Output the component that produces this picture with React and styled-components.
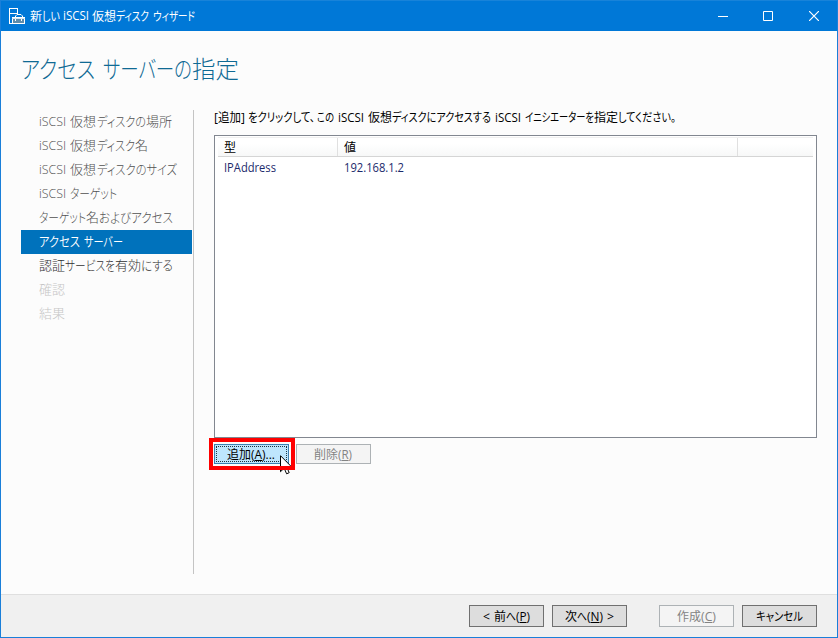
import React, { useLayoutEffect, useRef } from "react";
import styled, { createGlobalStyle } from "styled-components";

const GlobalStyle = createGlobalStyle`
  * { box-sizing: border-box; }
  body { margin: 0; background: #fcfcfc; }
`;

const Window = styled.div`
  width: 838px;
  height: 638px;
  display: flex;
  flex-direction: column;
  background: #fcfcfc;
  border: 1px solid #1a7fd9;
  border-top: 0;
  font-family: "Open Sans", "Noto Sans CJK JP", sans-serif;
  font-size: 12px;
  color: #000;
  overflow: hidden;
`;

const TitleBar = styled.header`
  height: 31px;
  flex: none;
  display: flex;
  align-items: center;
  background: #0078d7;
  border-top: 1px solid #1883d9;
  color: #fff;
  padding-left: 8px;
`;

const WindowTitle = styled.div`
  margin-left: 4px;
  padding-bottom: 1px;
  flex: 1;
`;

const WindowControls = styled.div`
  display: flex;
`;

const ControlButton = styled.button`
  width: 46px;
  height: 30px;
  padding: 0 0 1px;
  border: 0;
  background: none;
  color: #fff;
  display: flex;
  align-items: center;
  justify-content: center;
`;

const PageTitle = styled.h1`
  margin: 0;
  height: 79px;
  flex: none;
  padding: 19px 0 0 20px;
  font-size: 24px;
  font-weight: 200;
  line-height: 38px;
  color: #0f6a94;
`;

const Body = styled.div`
  flex: 1;
  min-height: 0;
  display: flex;
`;

const Sidebar = styled.nav`
  width: 193px;
  height: 464px;
  padding: 0 1px 0 20px;
  border-right: 1px solid #c4c4c4;
`;

const stepColors = { done: "#505050", current: "#ffffff", next: "#303030", disabled: "#c6c6c6" };

const Step = styled.div`
  height: 24px;
  line-height: 22px;
  padding-left: 18px;
  font-size: 13px;
  font-weight: ${(p) => (p.$state === "current" ? 350 : 300)};
  color: ${(p) => stepColors[p.$state]};
  background: ${(p) => (p.$state === "current" ? "#0072bc" : "transparent")};
`;

const Content = styled.main`
  width: 603px;
  margin-left: 20px;
`;

const Instruction = styled.div`
  height: 25px;
  line-height: 16px;
`;

const Table = styled.div`
  height: 303px;
  padding: 1px 3px;
  border: 1px solid #828790;
  background: #fff;
`;

const HeaderRow = styled.div`
  height: 20px;
  display: flex;
  border-top: 1px solid #f0f0f0;
  border-bottom: 1px solid #d5d5d5;
  background: linear-gradient(#fff 30%, #f7f8f8);
`;

const HeaderCell = styled.div`
  width: ${(p) => p.$width}px;
  padding-left: 6px;
  line-height: 19px;
  border-right: 1px solid #e0e0e0;
`;

const DataRow = styled.div`
  height: 22px;
  display: flex;
  line-height: 22px;
  color: #1b2a6b;
`;

const DataCell = styled.div`
  width: ${(p) => p.$width}px;
  padding-left: 6px;
`;

const Actions = styled.div`
  display: flex;
  gap: 7px;
  padding-top: 6px;
`;

const buttonBorder = { normal: "#707070", hot: "#3c7fb1", disabled: "#adb2b5" };
const buttonFill = { normal: "#dddddd", hot: "#bee6fd", disabled: "#f4f4f4" };

const Button = styled.button`
  position: relative;
  width: 75px;
  height: ${(p) => p.$height || 22}px;
  padding: 2px 1px 0 0;
  display: flex;
  align-items: center;
  justify-content: center;
  border: 1px solid ${(p) => buttonBorder[p.$kind || "normal"]};
  background: ${(p) => buttonFill[p.$kind || "normal"]};
  color: ${(p) => (p.$kind === "disabled" ? "#838383" : "#000")};
  font: inherit;
  line-height: 18px;
`;

const FocusRing = styled.span`
  position: absolute;
  inset: 1px;
  border: 1px dotted #1c3442;
`;

const AddArea = styled.div`
  position: relative;
`;

const Highlight = styled.span`
  position: absolute;
  left: -5px;
  top: -6px;
  width: 86px;
  height: 32px;
  border: 4px solid #f00;
  pointer-events: none;
`;

const Pointer = styled.svg`
  position: absolute;
  left: 66px;
  top: 11px;
`;

const Footer = styled.footer`
  height: 43px;
  flex: none;
  display: flex;
  justify-content: flex-end;
  gap: 8px;
  padding: 10px 20px 0 0;
  background: #f0f0f0;
  border-top: 1px solid #dfdfdf;
`;

const NextButton = styled(Button)`
  margin-right: 24px;
`;

const LineBox = styled.span`
  display: flex;
  white-space: pre;
`;

const RunBox = styled.span`
  flex: none;
  display: block;
  width: ${(p) => p.$width}px;
  margin-right: ${(p) => p.$gap}px;
  white-space: pre;
`;

const RunText = styled.span`
  display: inline-block;
  transform-origin: 0 50%;
  font-feature-settings: "palt";
`;

/* Condenses a stretch of text to the given advance width. */
function Run({ width, gap = 0, children }) {
  const ref = useRef(null);
  useLayoutEffect(() => {
    const el = ref.current;
    el.style.transform = "none";
    const natural = el.getBoundingClientRect().width;
    el.style.transform = `scaleX(${width / natural})`;
  }, [width, children]);
  return (
    <RunBox $width={width} $gap={gap}>
      <RunText ref={ref}>{children}</RunText>
    </RunBox>
  );
}

/* Each run is [text, width, gap after it]. */
function Line({ runs }) {
  return (
    <LineBox>
      {runs.map(([text, width, gap], i) => (
        <Run key={i} width={width} gap={gap}>{text}</Run>
      ))}
    </LineBox>
  );
}

const steps = [
  { state: "done", runs: [["iSCSI", 27, 4], ["仮想", 26, 1], ["ディスクの", 49], ["場所", 26]] },
  { state: "done", runs: [["iSCSI", 27, 4], ["仮想", 26, 1], ["ディスク", 38], ["名", 13]] },
  { state: "done", runs: [["iSCSI", 27, 4], ["仮想", 26, 1], ["ディスクのサイズ", 80]] },
  { state: "done", runs: [["iSCSI", 27, 4], ["ターゲット", 47]] },
  { state: "done", runs: [["ターゲット", 47], ["名", 13], ["およびアクセス", 74]] },
  { state: "current", runs: [["アクセス", 41, 4], ["サーバー", 39]] },
  { state: "next", runs: [["認証", 26], ["サービスを", 50], ["有効", 26], ["にする", 32]] },
  { state: "disabled", runs: [["確認", 26]] },
  { state: "disabled", runs: [["結果", 26]] },
];

const instruction = [
  ["[", 4], ["追加", 23], ["]", 4, 3], ["をクリックして、", 67, 2], ["この", 17, 4],
  ["iSCSI", 26, 4], ["仮想", 24], ["ディスクにアクセスする", 99, 4],
  ["iSCSI", 26, 4], ["イニシエーターを", 69], ["指定", 24], ["してください。", 58],
];

function WizardIcon() {
  return (
    <svg width="17" height="17" viewBox="0 0 17 17" fill="none" stroke="#fff" shapeRendering="crispEdges">
      <path d="M7 15.5H.5v-15h8v5h-8M8.5 0.5v6" />
      <path d="M3.5 9.5h12v6h-12z" fill="#5e8cab" />
      <path d="M3 10.5h13" stroke="#d8e7f2" />
      <path d="M6.5 9.5V8L8 6.5h4L13.5 8v1.5" shapeRendering="auto" />
      <path d="M6.5 11v1.5M12.5 11v1.5" />
    </svg>
  );
}

export default function App() {
  return (
    <>
      <GlobalStyle />
      <Window>
        <TitleBar>
          <WizardIcon />
          <WindowTitle>
            <Line runs={[["新", 12], ["しい", 18, 3], ["iSCSI", 26, 3], ["仮想", 24], ["ディスク", 33, 4], ["ウィザード", 42]]} />
          </WindowTitle>
          <WindowControls>
            <ControlButton aria-label="最小化">
              <svg width="12" height="10"><path d="M2 5.5h10" stroke="#fff" /></svg>
            </ControlButton>
            <ControlButton aria-label="最大化">
              <svg width="10" height="10"><path d="M.5.5h9v9h-9z" fill="none" stroke="#fff" /></svg>
            </ControlButton>
            <ControlButton aria-label="閉じる">
              <svg width="10" height="10"><path d="M0 0l10 10M10 0L0 10" stroke="#fff" strokeWidth="1.2" /></svg>
            </ControlButton>
          </WindowControls>
        </TitleBar>
        <PageTitle>
          <Line runs={[["アクセス", 74, 8], ["サーバーの", 89], ["指定", 47]]} />
        </PageTitle>
        <Body>
          <Sidebar>
            {steps.map((s, i) => (
              <Step key={i} $state={s.state}><Line runs={s.runs} /></Step>
            ))}
          </Sidebar>
          <Content>
            <Instruction><Line runs={instruction} /></Instruction>
            <Table>
              <HeaderRow>
                <HeaderCell $width={120}>型</HeaderCell>
                <HeaderCell $width={400}>値</HeaderCell>
              </HeaderRow>
              <DataRow>
                <DataCell $width={120}><Run width={52}>IPAddress</Run></DataCell>
                <DataCell $width={400}><Run width={60}>192.168.1.2</Run></DataCell>
              </DataRow>
            </Table>
            <Actions>
              <AddArea>
                <Button $kind="hot" $height={20}>
                  <FocusRing />
                  <Run width={24}>追加</Run>
                  <Run width={24}>(<u>A</u>)...</Run>
                </Button>
                <Pointer width="13" height="21" viewBox="0 0 13 21">
                  <path d="M.5.7v16l3.7-3.5 2.4 5.6 2.6-1.1-2.4-5.4h5.2z" fill="#fff" stroke="#000" />
                </Pointer>
                <Highlight />
              </AddArea>
              <Button $kind="disabled" $height={20}>
                <Run width={24}>削除</Run>
                <Run width={14}>(<u>R</u>)</Run>
              </Button>
            </Actions>
          </Content>
        </Body>
        <Footer>
          <Button>
            <Run width={7} gap={4}>&lt;</Run>
            <Run width={12}>前</Run>
            <Run width={10}>へ</Run>
            <Run width={14}>(<u>P</u>)</Run>
          </Button>
          <NextButton>
            <Run width={12}>次</Run>
            <Run width={10}>へ</Run>
            <Run width={16} gap={4}>(<u>N</u>)</Run>
            <Run width={7}>&gt;</Run>
          </NextButton>
          <Button $kind="disabled">
            <Run width={24}>作成</Run>
            <Run width={15}>(<u>C</u>)</Run>
          </Button>
          <Button><Run width={47}>キャンセル</Run></Button>
        </Footer>
      </Window>
    </>
  );
}
